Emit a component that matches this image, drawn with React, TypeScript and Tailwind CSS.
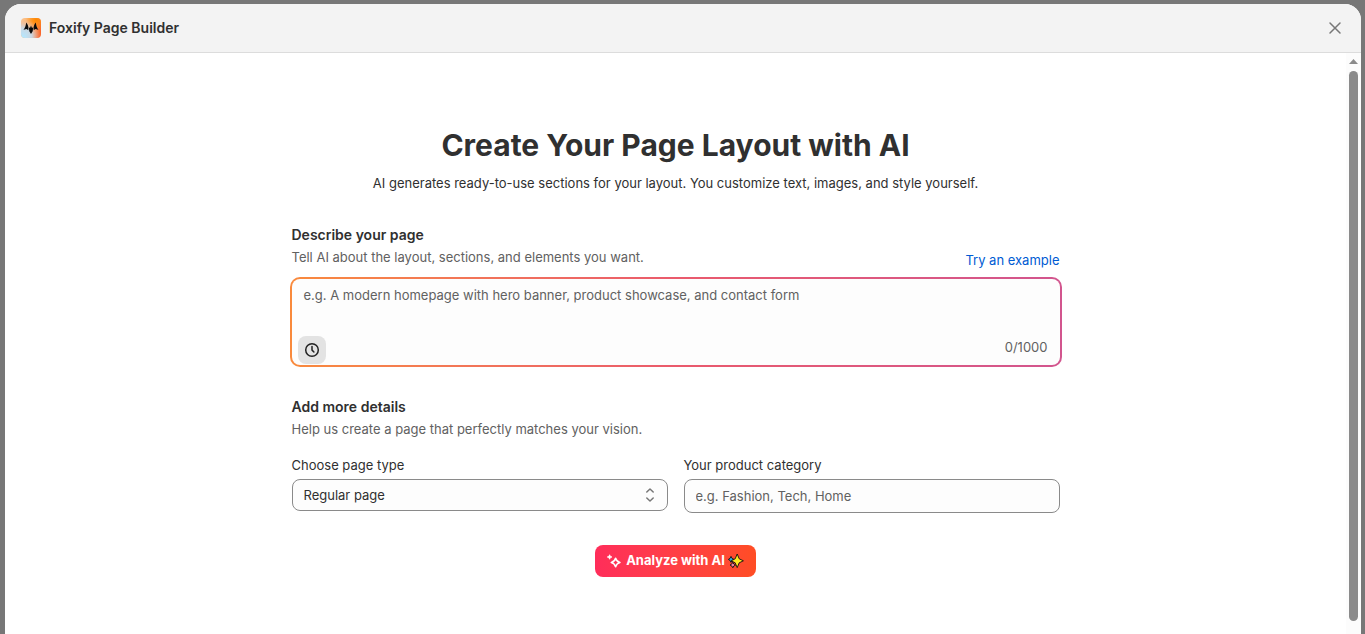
import type { ReactNode } from 'react';

const MAX_LENGTH = 1000;

const PAGE_TYPES = ['Regular page', 'Home page', 'Product page', 'Collection page'];

function FoxifyLogo() {
  return (
    <svg viewBox="0 0 20 20" className="h-5 w-5" aria-hidden="true">
      <defs>
        <linearGradient id="fox-base" x1="0" y1="0.2" x2="1" y2="0.6">
          <stop offset="0" stopColor="#fbc490" />
          <stop offset="0.5" stopColor="#fdaa55" />
          <stop offset="1" stopColor="#f9662b" />
        </linearGradient>
        <radialGradient id="fox-blue" cx="0.1" cy="0.95" r="0.9">
          <stop offset="0" stopColor="#b5e7ff" />
          <stop offset="0.5" stopColor="#c6dcf0" stopOpacity="0.9" />
          <stop offset="1" stopColor="#f3b7a5" stopOpacity="0" />
        </radialGradient>
        <radialGradient id="fox-orange" cx="0.75" cy="0.1" r="0.5">
          <stop offset="0" stopColor="#ff8800" />
          <stop offset="1" stopColor="#ff8800" stopOpacity="0" />
        </radialGradient>
      </defs>
      <rect width="20" height="20" rx="4" fill="url(#fox-base)" />
      <rect width="20" height="20" rx="4" fill="url(#fox-orange)" />
      <rect width="20" height="20" rx="4" fill="url(#fox-blue)" />
      <path
        d="M5.1 4.4C6.9 6.2 7.8 8.6 7.3 12.2L5.6 11.1 2.4 11.7C3.9 10 5 7.6 5.1 4.4ZM14.9 4.4C13.1 6.2 12.2 8.6 12.7 12.2L14.4 11.1 17.6 11.7C16.1 10 15 7.6 14.9 4.4ZM10 7.6 10.9 9.8 12.2 9.4 11.7 13.2 10 15.9 8.3 13.2 7.8 9.4 9.1 9.8Z"
        fill="#0b0b0b"
      />
    </svg>
  );
}

function SparkleIcon() {
  return (
    <svg viewBox="0 0 16 16" className="h-4 w-4" aria-hidden="true">
      <path
        d="M8.6 5.2c.7 2.4 1.9 3.6 4.3 4.3-2.4.7-3.6 1.9-4.3 4.3-.7-2.4-1.9-3.6-4.3-4.3 2.4-.7 3.6-1.9 4.3-4.3Z"
        fill="none"
        stroke="#fff"
        strokeWidth="1.6"
        strokeLinejoin="round"
      />
      <path
        d="M2.6 1.8c.4 1.3.9 1.8 2.2 2.2-1.3.4-1.8.9-2.2 2.2C2.2 4.9 1.7 4.4.4 4c1.3-.4 1.8-.9 2.2-2.2Z"
        fill="#fff"
        stroke="#fff"
        strokeWidth="1"
      />
    </svg>
  );
}

function SparklesEmoji() {
  return (
    <svg viewBox="0 0 16 16" className="h-4 w-4" aria-hidden="true">
      <g stroke="#111" strokeLinejoin="round">
        <path
          d="m3 3.4 1 2 2 1-2 1-1 2-1-2-1.6-1 1.6-1Z"
          fill="#29a9e1"
          strokeWidth="0.9"
        />
        <path
          d="m4.8 9.2 1 1.8 1.8 1-1.8 1-1 1.8-1-1.8-1.8-1 1.8-1Z"
          fill="#f07fa8"
          strokeWidth="0.9"
        />
        <path
          d="M9.2 1 11.2 5.8l4.2 2-4.2 2-2 4.8-2-4.8-4-2 4-2Z"
          fill="#ffe81f"
          strokeWidth="0.9"
        />
      </g>
    </svg>
  );
}

function SectionHeading({ title, children }: { title: string; children: ReactNode }) {
  return (
    <div className="space-y-0.5">
      <h2 className="text-sm leading-5 font-semibold">{title}</h2>
      <p className="text-[13px] leading-5 text-[#616161]">{children}</p>
    </div>
  );
}

function Header() {
  return (
    <header className="flex h-[49px] shrink-0 items-center justify-between border-b border-[#dcdcdc] bg-[#f3f3f3] px-4">
      <div className="flex items-center gap-2">
        <FoxifyLogo />
        <h1 className="text-sm font-semibold">Foxify Page Builder</h1>
      </div>
      <button type="button" aria-label="Close" className="flex h-5 w-5 items-center justify-center">
        <svg viewBox="0 0 20 20" className="h-5 w-5" aria-hidden="true">
          <path d="m5 5 10 10M15 5 5 15" stroke="#777" strokeWidth="1.5" strokeLinecap="round" />
        </svg>
      </button>
    </header>
  );
}

function Scrollbar() {
  return (
    <div className="flex w-[15px] shrink-0 flex-col items-center bg-[#fcfcfc] pt-1.5 pb-[13px]" aria-hidden="true">
      <svg viewBox="0 0 9 5" className="h-[5px] w-[9px] shrink-0">
        <path d="M4.5 0 9 5H0Z" fill="#8b8b8b" />
      </svg>
      <div className="mt-[7px] w-[9px] flex-1 rounded-full bg-[#8b8b8b]" />
    </div>
  );
}

function PromptBox() {
  return (
    <div className="-mx-0.5 rounded-[10px] bg-linear-to-r from-[#f98a3c] via-[#ea5a6c] to-[#d2558e] p-0.5">
      <div className="flex h-[86px] flex-col justify-between rounded-lg bg-[#fdfdfd]">
        <textarea
          id="prompt"
          maxLength={MAX_LENGTH}
          placeholder="e.g. A modern homepage with hero banner, product showcase, and contact form"
          className="block h-10 w-full resize-none px-3 py-1.5 text-[13px] leading-5 outline-none placeholder:text-[#616161]"
        />
        <div className="flex items-center justify-between pr-3 pb-px pl-1.5">
          <button
            type="button"
            aria-label="History"
            className="flex h-7 w-7 items-center justify-center rounded-lg bg-[#e3e3e3]"
          >
            <svg viewBox="0 0 20 20" className="h-5 w-5" aria-hidden="true">
              <g fill="none" stroke="#222" strokeWidth="1.5" strokeLinecap="round">
                <circle cx="10" cy="10" r="6.3" />
                <path d="M10 6.5v3.2c0 .3.1.5.3.7l1.6 1.6" />
              </g>
            </svg>
          </button>
          <span className="pb-1.5 text-[13px] leading-5 text-[#616161]">0/{MAX_LENGTH}</span>
        </div>
      </div>
    </div>
  );
}

export default function App() {
  return (
    <div className="h-screen overflow-hidden bg-[#777] pt-1 pr-1 pl-[5px] font-['Inter',sans-serif] text-[#303030]">
      <div className="flex h-full flex-col overflow-hidden rounded-t-2xl bg-white">
        <Header />

        <div className="flex min-h-0 flex-1">
          <main className="min-w-0 flex-1 overflow-hidden px-4 pt-[72px]">
            <form className="mx-auto max-w-3xl">
              <div className="space-y-2 text-center">
                <h2 className="text-3xl leading-10 font-bold">Create Your Page Layout with AI</h2>
                <p className="text-[13px] leading-5">
                  AI generates ready-to-use sections for your layout. You customize text, images, and style yourself.
                </p>
              </div>

              <div className="mt-8 mb-[7px] flex items-end justify-between">
                <label htmlFor="prompt" className="pb-[3px]">
                  <SectionHeading title="Describe your page">
                    Tell AI about the layout, sections, and elements you want.
                  </SectionHeading>
                </label>
                <a href="#example" className="text-[13px] leading-5 text-[#005bd3]">
                  Try an example
                </a>
              </div>
              <PromptBox />

              <div className="mt-[30px]">
                <SectionHeading title="Add more details">
                  Help us create a page that perfectly matches your vision.
                </SectionHeading>
              </div>

              <div className="mt-4 grid grid-cols-2 items-start gap-4 text-[13px] leading-5">
                <div className="space-y-1">
                  <label htmlFor="page-type" className="block">
                    Choose page type
                  </label>
                  <div className="relative">
                    <select
                      id="page-type"
                      className="block h-8 w-full appearance-none rounded-lg border border-[#8a8a8a] bg-[#fdfdfd] pr-8 pl-[11px]"
                    >
                      {PAGE_TYPES.map((type) => (
                        <option key={type}>{type}</option>
                      ))}
                    </select>
                    <svg
                      viewBox="0 0 20 20"
                      className="pointer-events-none absolute top-1.5 right-2 h-5 w-5"
                      aria-hidden="true"
                    >
                      <path
                        d="m6.8 7 3.2-3 3.2 3M6.8 13l3.2 3 3.2-3"
                        fill="none"
                        stroke="#777"
                        strokeWidth="1.5"
                        strokeLinecap="round"
                        strokeLinejoin="round"
                      />
                    </svg>
                  </div>
                </div>
                <div className="space-y-1">
                  <label htmlFor="category" className="block">
                    Your product category
                  </label>
                  <input
                    id="category"
                    type="text"
                    placeholder="e.g. Fashion, Tech, Home"
                    className="block h-[34px] w-full rounded-lg border border-[#8a8a8a] bg-[#fdfdfd] px-[11px] placeholder:text-[#616161]"
                  />
                </div>
              </div>

              <div className="mt-8 flex justify-center">
                <button
                  type="submit"
                  className="flex h-8 items-center gap-[3px] rounded-lg bg-linear-to-r from-[#ff2d5a] to-[#ff4d24] px-3 text-[13px] font-bold text-white"
                >
                  <SparkleIcon />
                  Analyze with AI
                  <SparklesEmoji />
                </button>
              </div>
            </form>
          </main>
          <Scrollbar />
        </div>
      </div>
    </div>
  );
}
